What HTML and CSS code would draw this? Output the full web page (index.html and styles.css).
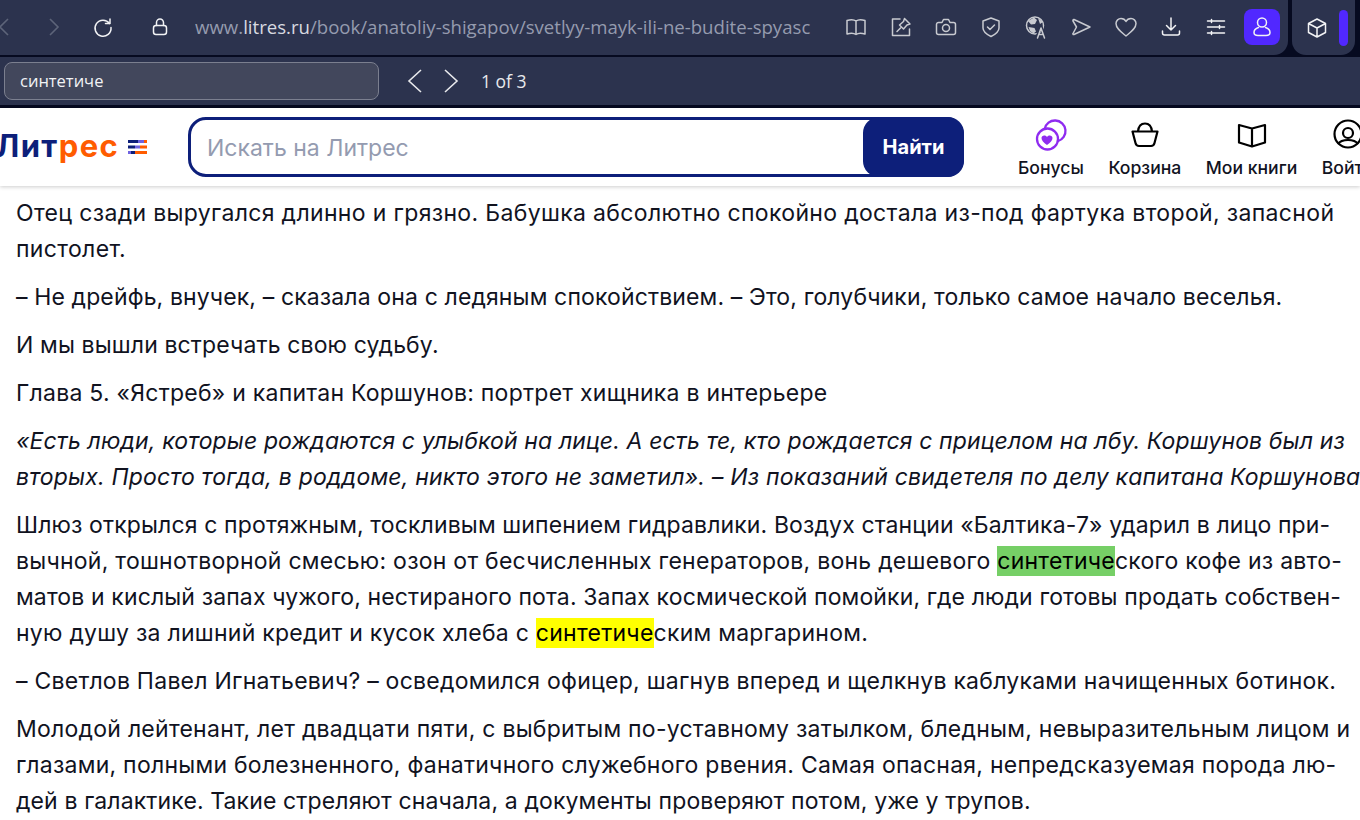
FILE: index.html
```html
<!DOCTYPE html>
<html lang="ru">
<head>
    <meta charset="UTF-8">
    <title>Литрес</title>
    <link rel="stylesheet" href="styles.css">
</head>
<body>
    <!-- Browser toolbar -->
    <div class="toolbar">
        <div class="toolbar-main">
            <svg class="nav-back" width="14" height="20" viewBox="0 0 14 20"><path d="M8 2 L0 10 L8 18"/></svg>
            <svg class="nav-forward" width="14" height="20" viewBox="0 0 14 20"><path d="M3 2 L11 10 L3 18"/></svg>
            <svg class="tool-icon bright reload" width="22" height="22" viewBox="0 0 22 22"><path d="M17.5 7.5 A8 8 0 1 0 19 11.5"/><path d="M18 3 V7.5 H13.5"/></svg>
            <svg class="tool-icon bright lock" width="18" height="20" viewBox="0 0 18 20"><rect x="2.5" y="8.5" width="13" height="9" rx="2.5"/><path d="M5.5 8.5 V5.5 A3.5 3.5 0 0 1 12.5 5.5 V8.5"/></svg>
            <div class="url"><span>www.</span><span class="host">litres.ru</span><span>/book/anatoliy-shigapov/svetlyy-mayk-ili-ne-budite-spyasc</span></div>
            <div class="tool-icons">
                <svg class="tool-icon" width="22" height="22" viewBox="0 0 22 22"><path d="M11 5 C9 3.5 5 3.5 2 4.5 V18 C5 17 9 17 11 18.5 C13 17 17 17 20 18 V4.5 C17 3.5 13 3.5 11 5 Z M11 5 V18.5"/></svg>
                <svg class="tool-icon" width="22" height="22" viewBox="0 0 22 22"><path d="M10 3 H2.5 V19.5 H19.5 V13"/><path d="M14.5 2.5 L20 8 L17 9 L13.5 13 L9.5 9 L13.5 5.5 Z M10.5 12 L7 15.5"/></svg>
                <svg class="tool-icon" width="22" height="22" viewBox="0 0 22 22"><path d="M3.5 6.5 H7 L8.5 3.5 H13.5 L15 6.5 H18.5 A2 2 0 0 1 20.5 8.5 V16.5 A2 2 0 0 1 18.5 18.5 H3.5 A2 2 0 0 1 1.5 16.5 V8.5 A2 2 0 0 1 3.5 6.5 Z"/><circle cx="11" cy="12" r="3.5"/></svg>
                <svg class="tool-icon" width="22" height="22" viewBox="0 0 22 22"><path d="M11 2 L19 5 V12 C19 16 15 18.5 11 20.5 C7 18.5 3 16 3 12 V5 Z"/><path d="M7.5 11 L10 13.5 L14.5 9"/></svg>
                <svg class="tool-icon" width="22" height="24" viewBox="0 0 22 24"><circle cx="10" cy="10.5" r="8.5"/><path class="fill" d="M3 6 L9 2.5 L12 5 L10 9 L6 9.5 Z M3.5 12 L9.5 13 L11 16.5 L8.5 18.5 L5 16 Z M13 3 L18 7 L15 9 Z"/><path class="letter-gap" d="M11.5 23 L16 11.5 L20.5 23"/><path d="M12.5 23 L16 13 L19.5 23 M13.7 19.5 H18.3"/></svg>
                <svg class="tool-icon" width="22" height="22" viewBox="0 0 22 22"><path d="M4 3.5 L20 11 L4 18.5 C3 18.8 2.7 18 3 17.5 L6.5 11 L3 5 C2.7 4.3 3.2 3.2 4 3.5 Z"/></svg>
                <svg class="tool-icon" width="22" height="22" viewBox="0 0 22 22"><path d="M11 20 C6 16 1 12.5 1 7.5 C1 4.5 3.5 2.5 6 2.5 C8 2.5 10 3.5 11 5.5 C12 3.5 14 2.5 16 2.5 C18.5 2.5 21 4.5 21 7.5 C21 12.5 16 16 11 20 Z"/></svg>
                <svg class="tool-icon bright" width="22" height="22" viewBox="0 0 22 22"><path d="M11 2 V14 M6.5 9.5 L11 14 L15.5 9.5 M2.5 15 V17 A2 2 0 0 0 4.5 19 H17.5 A2 2 0 0 0 19.5 17 V15"/></svg>
                <svg class="tool-icon bright" width="22" height="22" viewBox="0 0 22 22"><path d="M2.5 5 H19.5 M2.5 11 H19.5 M2.5 17 H19.5"/><path d="M6.5 3.5 V6.5 M14.5 9.5 V12.5 M6.5 15.5 V18.5"/></svg>
                <div class="profile-btn">
                    <svg class="tool-icon bright" width="22" height="24" viewBox="0 0 22 24"><circle cx="11" cy="7.5" r="4.5"/><path d="M7.5 12.5 C4 13.5 3 15.5 3 17.5 C3 20 5 20.5 7 20.5 H15 C17 20.5 19 20 19 17.5 C19 15.5 18 13.5 14.5 12.5"/></svg>
                </div>
            </div>
        </div>
        <div class="toolbar-side">
            <svg class="tool-icon bright" width="20" height="22" viewBox="0 0 20 22"><path d="M10 2 L18.5 6.5 V15.5 L10 20 L1.5 15.5 V6.5 Z M1.5 6.5 L10 11 L18.5 6.5 M10 11 V20"/></svg>
            <div class="side-mark"></div>
        </div>
    </div>

    <!-- Find bar -->
    <div class="findbar">
        <div class="find-input">синтетиче</div>
        <svg class="find-arrow" width="16" height="26" viewBox="0 0 16 26"><path d="M14 2 L2 13 L14 24"/></svg>
        <svg class="find-arrow" width="16" height="26" viewBox="0 0 16 26"><path d="M2 2 L14 13 L2 24"/></svg>
        <span class="find-count">1 of 3</span>
    </div>

    <!-- Site header -->
    <header class="site-header">
        <div class="logo">
            <span class="logo-text">Лит<span class="logo-accent">рес</span></span>
            <svg class="logo-mark" width="19" height="16" viewBox="0 0 19 16">
                <rect x="0" y="1" width="10" height="3" fill="#0d1f7a"/><rect x="10" y="1" width="6" height="3" fill="#6f63e0"/><rect x="16" y="1" width="3" height="3" fill="#ff5c00"/>
                <rect x="0" y="6.5" width="7" height="3" fill="#0d1f7a"/><rect x="7" y="6.5" width="5" height="3" fill="#6f63e0"/><rect x="12" y="6.5" width="7" height="3" fill="#ff5c00"/>
                <rect x="0" y="12" width="3" height="3" fill="#6f63e0"/><rect x="3" y="12" width="4" height="3" fill="#0d1f7a"/><rect x="7" y="12" width="12" height="3" fill="#ff5c00"/>
            </svg>
        </div>
        <div class="search">
            <div class="search-field">Искать на Литрес</div>
            <div class="search-btn">Найти</div>
        </div>
        <nav class="site-nav">
            <div class="nav-item">
                <svg width="34" height="34" viewBox="0 0 34 34"><g class="bonus"><circle cx="13.5" cy="21" r="10.5"/><path d="M10.7 10.9 A10.5 10.5 0 1 1 23.8 23.1"/></g><path class="bonus-heart" d="M13 27 C9.5 24.5 7.5 22.5 7.5 20 C7.5 17.5 11 16.5 13 19 C15 16.5 18.5 17.5 18.5 20 C18.5 22.5 16.5 24.5 13 27 Z"/></svg>
                <span>Бонусы</span>
            </div>
            <div class="nav-item">
                <svg width="34" height="34" viewBox="0 0 34 34"><g class="line"><path d="M4.5 13.5 H29.5 L26.5 25 C26 27 25 28 23 28 H11 C9 28 8 27 7.5 25 Z"/><path d="M10 13.5 C10.5 8 13.5 5.5 17 5.5 C20.5 5.5 23.5 8 24 13.5"/></g></svg>
                <span>Корзина</span>
            </div>
            <div class="nav-item">
                <svg width="34" height="34" viewBox="0 0 34 34"><g class="line"><path d="M17 10.5 L4 7 V24.5 L17 28.5 L30 24.5 V7 Z M17 10.5 V28.5"/></g></svg>
                <span>Мои книги</span>
            </div>
            <div class="nav-item">
                <svg width="34" height="34" viewBox="0 0 34 34"><g class="line"><circle cx="17" cy="16" r="13.5"/><circle cx="17" cy="15" r="5"/><path d="M7 26 C9 23 13 22 17 22 C21 22 25 23 27 26"/></g></svg>
                <span>Войти</span>
            </div>
        </nav>
    </header>

    <!-- Book text -->
    <main class="book-text">
        <p><span class="wide">Отец сзади выругался длинно и грязно. Бабушка абсолютно спокойно достала из-под фартука второй, запасной</span><span class="wide">пистолет.</span></p>
        <p><span class="tight">– Не дрейфь, внучек, – сказала она с ледяным спокойствием. – Это, голубчики, только самое начало веселья.</span></p>
        <p><span class="tight">И мы вышли встречать свою судьбу.</span></p>
        <p><span>Глава 5. «Ястреб» и капитан Коршунов: портрет хищника в интерьере</span></p>
        <p class="epigraph"><span>«Есть люди, которые рождаются с улыбкой на лице. А есть те, кто рождается с прицелом на лбу. Коршунов был из</span><span class="wide">вторых. Просто тогда, в роддоме, никто этого не заметил». – Из показаний свидетеля по делу капитана Коршунова</span></p>
        <p><span class="tight">Шлюз открылся с протяжным, тоскливым шипением гидравлики. Воздух станции «Балтика-7» ударил в лицо при-</span><span>вычной, тошнотворной смесью: озон от бесчисленных генераторов, вонь дешевого <mark class="found-active">синтетиче</mark>ского кофе из авто-</span><span class="tight">матов и кислый запах чужого, нестираного пота. Запах космической помойки, где люди готовы продать собствен-</span><span>ную душу за лишний кредит и кусок хлеба с <mark class="found">синтетиче</mark>ским маргарином.</span></p>
        <p><span>– Светлов Павел Игнатьевич? – осведомился офицер, шагнув вперед и щелкнув каблуками начищенных ботинок.</span></p>
        <p><span>Молодой лейтенант, лет двадцати пяти, с выбритым по-уставному затылком, бледным, невыразительным лицом и</span><span>глазами, полными болезненного, фанатичного служебного рвения. Самая опасная, непредсказуемая порода лю-</span><span class="tight">дей в галактике. Такие стреляют сначала, а документы проверяют потом, уже у трупов.</span></p>
    </main>
</body>
</html>
```

FILE: styles.css
```css
/* General */
html, body {
    height: 820px;
    overflow: hidden;
}

body {
    margin: 0;
    background-color: #fff;
    color: #11131f;
    font-family: "Inter", "Noto Sans", sans-serif;
}

svg {
    flex: none;
    display: block;
    fill: none;
}

/* Browser toolbar */
.toolbar {
    display: flex;
    height: 55px;
    background-color: #060a20;
    gap: 4px;
    padding-right: 5px;
}

.toolbar-main {
    flex: 1;
    min-width: 0;
    display: flex;
    align-items: center;
    background-color: #2c334e;
    border-radius: 0 0 14px 0;
    overflow: hidden;
    padding-bottom: 1px;
}

.toolbar-side {
    width: 63px;
    display: flex;
    align-items: center;
    background-color: #2c334e;
    border-radius: 0 0 14px 14px;
    padding-left: 15px;
    gap: 12px;
    box-sizing: border-box;
    flex: none;
}

.nav-back,
.nav-forward {
    stroke: #5d6479;
    stroke-width: 1.6;
}

.nav-forward {
    margin-left: 33px;
}

.tool-icon {
    stroke: #c8cad0;
    stroke-width: 1.5;
    stroke-linecap: round;
    stroke-linejoin: round;
}

.tool-icon.bright {
    stroke: #f2f3f5;
}

.tool-icon .fill {
    fill: #c8cad0;
    stroke: none;
}

.tool-icon .letter-gap {
    stroke: #2c334e;
    stroke-width: 3;
}

.reload {
    margin-left: 31px;
}

.lock {
    margin-left: 37px;
}

.url {
    margin-left: 26px;
    width: 617px;
    flex: none;
    overflow: hidden;
    white-space: nowrap;
    font-family: "Open Sans", sans-serif;
    font-size: 18.6px;
    color: #959bae;
    padding-bottom: 2px;
}

.host {
    color: #d8dae0;
}

.tool-icons {
    margin-left: 33px;
    display: flex;
    align-items: center;
    gap: 23px;
}

.profile-btn {
    width: 36px;
    height: 36px;
    margin-left: -6px;
    background-color: #5128ff;
    border-radius: 8px;
    display: flex;
    align-items: center;
    justify-content: center;
}

.side-mark {
    width: 9px;
    height: 36px;
    background-color: #5128ff;
    border-radius: 5px;
}

/* Find bar */
.findbar {
    height: 48px;
    display: flex;
    align-items: center;
    background-color: #2c334e;
    border-top: 2px solid #060a20;
    border-bottom: 3px solid #060a20;
    padding-left: 4px;
}

.find-input {
    width: 358px;
    height: 36px;
    line-height: 36px;
    padding-left: 15px;
    background-color: #42475c;
    border: 1px solid #7b7f8f;
    border-radius: 8px;
    font-family: "Open Sans", sans-serif;
    font-size: 16.5px;
    color: #f2f3f5;
}

.find-arrow {
    stroke: #e8e9ec;
    stroke-width: 1.6;
    margin-left: 28px;
}

.find-arrow + .find-arrow {
    margin-left: 20px;
}

.find-count {
    margin-left: 22px;
    font-family: "Open Sans", sans-serif;
    font-size: 17.5px;
    color: #e8e9ec;
}

/* Site header */
.site-header {
    height: 78px;
    display: flex;
    align-items: center;
    background-color: #fff;
    box-shadow: 0 1px 4px rgba(0, 0, 0, 0.2);
    position: relative;
}

.logo {
    width: 188px;
    display: flex;
    align-items: center;
    overflow: hidden;
    flex: none;
}

.logo-text {
    margin-left: -4px;
    font-size: 31px;
    line-height: 34px;
    font-weight: 700;
    letter-spacing: 1.4px;
    color: #0d1f7a;
    padding-bottom: 3px;
}

.logo-accent {
    color: #ff5c00;
}

.logo-mark {
    margin-left: 9px;
}

.search {
    width: 776px;
    height: 60px;
    box-sizing: border-box;
    display: flex;
    align-items: stretch;
    border: 3px solid #0d1f7a;
    border-radius: 18px;
    flex: none;
}

.search-field {
    flex: 1;
    display: flex;
    align-items: center;
    padding: 2px 0 0 16px;
    font-size: 23px;
    color: #949bb0;
}

.search-btn {
    width: 101px;
    margin: -3px;
    display: flex;
    align-items: center;
    justify-content: center;
    background-color: #0d1f7a;
    border-radius: 16px;
    color: #fff;
    font-size: 20px;
    font-weight: 700;
}

.site-nav {
    display: flex;
    margin-left: 54px;
    gap: 24.5px;
    padding-top: 2px;
}

.nav-item {
    display: flex;
    flex-direction: column;
    align-items: center;
    gap: 5px;
    font-size: 17.6px;
    line-height: 22px;
    font-weight: 500;
    color: #11131f;
    white-space: nowrap;
}

.line {
    stroke: #000;
    stroke-width: 2.2;
    stroke-linejoin: round;
}

.bonus {
    stroke: #8f2bf0;
    stroke-width: 2.3;
}

.bonus-heart {
    fill: #8f2bf0;
}

/* Book text */
.book-text {
    padding: 9px 0 0 16px;
    font-size: 23px;
    letter-spacing: 0.25px;
    line-height: 36px;
    white-space: nowrap;
}

.book-text p {
    margin: 0 0 12px 0;
}

.book-text p span {
    display: block;
}

.book-text .wide {
    letter-spacing: 0.34px;
}

.book-text .tight {
    letter-spacing: 0.13px;
}

.book-text .epigraph {
    letter-spacing: 0.13px;
    font-style: italic;
}

.book-text .epigraph .wide {
    letter-spacing: 0.2px;
}

mark {
    color: #000;
    padding: 1px 0;
}

.found {
    background-color: #ffff00;
}

.found-active {
    background-color: #76cf66;
}
```
